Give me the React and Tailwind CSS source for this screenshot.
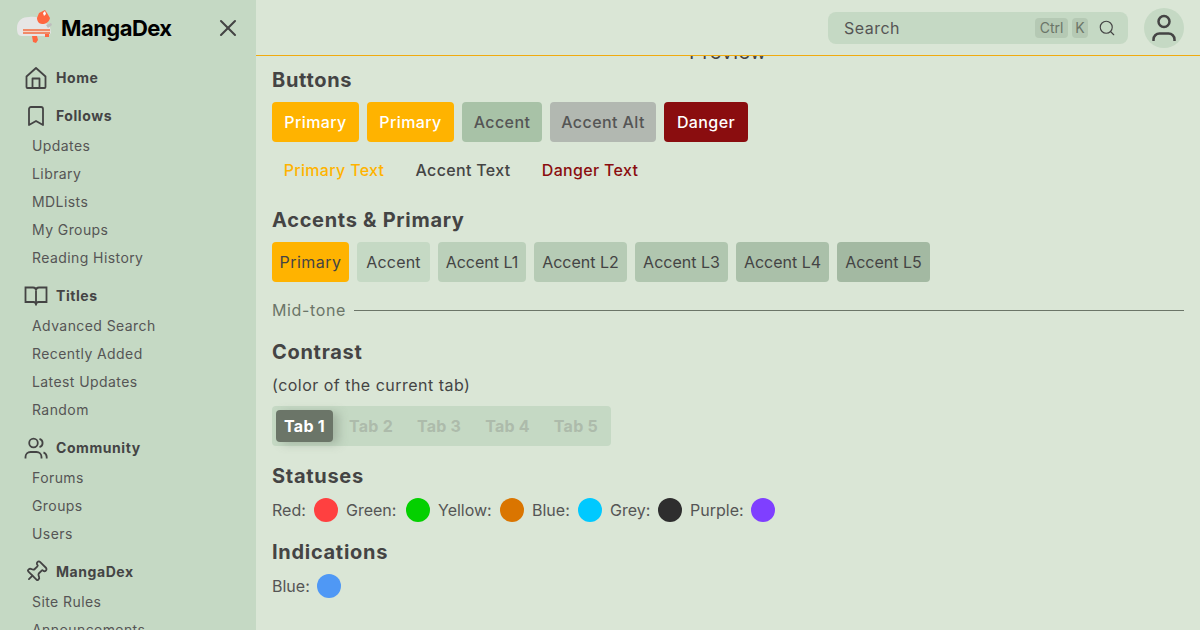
import { Bookmark, Pin, Search, X } from "lucide-react";

const font = "font-['Inter',sans-serif]";

function HomeIcon(props) {
  return (
    <svg viewBox="0 0 24 24" fill="none" stroke="currentColor" strokeWidth="1.8" strokeLinejoin="round" {...props}>
      <path d="M2.5 10.5 12 2l9.5 8.5V21a1 1 0 0 1-1 1h-17a1 1 0 0 1-1-1Z" />
      <path d="M8.5 22V12.5h7V22" />
    </svg>
  );
}

function BookIcon(props) {
  return (
    <svg viewBox="0 0 24 24" fill="none" stroke="currentColor" strokeWidth="1.8" {...props}>
      <path d="M1.5 3.5H9c1.7 0 3 1.3 3 3 0-1.7 1.3-3 3-3h7.5v14.5h-8c-1.5 0-2.5.8-2.5 2.5 0-1.7-1-2.5-2.5-2.5h-8Z" />
      <path d="M12 6.5v15" />
    </svg>
  );
}

function UsersIcon(props) {
  return (
    <svg viewBox="0 0 24 24" fill="none" stroke="currentColor" strokeWidth="1.7" {...props}>
      <circle cx="9.5" cy="7" r="4.3" />
      <path d="M1.5 22.5V21a5 5 0 0 1 5-5h6a5 5 0 0 1 5 5v1.5" />
      <path d="M15.5 2.8a4.4 4.4 0 0 1 0 8.4" />
      <path d="M19.5 16.3c2 .8 3.2 2.6 3.2 4.7v1.5" />
    </svg>
  );
}

const sections = [
  { icon: HomeIcon, title: "Home", items: [], size: "h-7" },
  { icon: Bookmark, title: "Follows", items: ["Updates", "Library", "MDLists", "My Groups", "Reading History"] },
  { icon: BookIcon, title: "Titles", items: ["Advanced Search", "Recently Added", "Latest Updates", "Random"] },
  { icon: UsersIcon, title: "Community", items: ["Forums", "Groups", "Users"] },
  { icon: Pin, title: "MangaDex", items: ["Site Rules", "Announcements"], tilt: "rotate-45" },
];

function CatLogo() {
  return (
    <svg width="44" height="40" viewBox="0 0 44 40" className="shrink-0">
      <path d="M3 20C3 12 9 9 15 9c7-1 11 1 15 4l6 6 1 6-3 3H8c-4 0-5-3-5-8z" fill="#e6e6e6" />
      <path d="M23 10l2-5 6-3 2 3 3 5c-1 4-4 6-8 6-3 0-5-3-5-6z" fill="#ff6740" />
      <path d="M29 5l2-2 1 3-2 2z" fill="#fff" />
      <path d="M32 17l5-2 1 2-4 3z" fill="#bdbdbd" />
      <path d="M9 21h27v5H9z" fill="#f08a68" />
      <path d="M9 23h27v1H9z" fill="#f3d6c8" />
      <path d="M18 28h5l1 4-2 3-3-1z" fill="#ff6740" />
      <path d="M31 26h4v3h-4z" fill="#ff6740" />
    </svg>
  );
}

function Section({ icon: Icon, title, items, size = "h-8", tilt = "" }) {
  return (
    <div className="flex flex-col">
      <div className={`flex items-center gap-2 px-6 ${size}`}>
        <Icon width={24} height={24} strokeWidth={1.8} className={`shrink-0 text-[#444] ${tilt}`} />
        <span className="text-sm font-bold tracking-[0.04em] text-[#444]">{title}</span>
      </div>
      {items.map((item) => (
        <div key={item} className="flex h-7 items-center pl-8 text-sm tracking-[0.03em] text-[#555]">
          {item}
        </div>
      ))}
    </div>
  );
}

function Sidebar() {
  return (
    <aside className="flex h-[630px] w-64 shrink-0 flex-col overflow-hidden bg-[#c5d9c4]">
      <div className="flex h-16 shrink-0 items-start pl-[14px] pr-[14px] pt-2">
        <CatLogo />
        <span className="ml-[3px] mt-[3px] text-[22px] font-bold leading-[34px] tracking-[-0.025em] text-black">MangaDex</span>
        <X size={28} strokeWidth={1.75} className="ml-auto mt-[6px] text-[#444]" />
      </div>
      <nav className="flex flex-col gap-2">
        {sections.map((s) => (
          <Section key={s.title} {...s} />
        ))}
      </nav>
    </aside>
  );
}

function Header() {
  return (
    <header className="relative z-10 flex h-14 shrink-0 items-center justify-end gap-4 border-b border-[#f0ab10] bg-[#dae6d6] pr-4">
      <div className="flex h-8 w-[300px] items-center rounded-lg bg-[#c5d9c4] pl-4 pr-3">
        <span className="text-base tracking-[0.03em] text-[#555]">Search</span>
        <span className="ml-auto flex h-5 w-[33px] items-center justify-center rounded bg-[#b5c9b4] text-sm text-[#6b7568]">Ctrl</span>
        <span className="ml-1 flex h-5 w-4 items-center justify-center rounded bg-[#b5c9b4] text-sm text-[#6b7568]">K</span>
        <Search size={18} strokeWidth={1.5} className="ml-[10px] text-[#444]" />
      </div>
      <div className="flex h-10 w-10 items-center justify-center rounded-full bg-[#c5d9c4]">
        <svg width="40" height="40" viewBox="0 0 40 40" fill="none" stroke="#444" strokeWidth="2.5">
          <circle cx="20" cy="13.5" r="5.5" />
          <path d="M9.5 33v-1.5a6 6 0 0 1 6-6h9a6 6 0 0 1 6 6V33" />
        </svg>
      </div>
    </header>
  );
}

function Btn({ className, children }) {
  return (
    <div className={`flex h-10 items-center justify-center rounded pb-px text-base ${className}`}>{children}</div>
  );
}

function Heading({ className = "", children }) {
  return <h2 className={`text-xl font-bold leading-7 tracking-[0.035em] text-[#444] ${className}`}>{children}</h2>;
}

function Dot({ label, width, className }) {
  return (
    <div className="flex items-center gap-2">
      <span className={`whitespace-nowrap text-base text-[#555] ${width}`}>{label}</span>
      <span className={`h-6 w-6 rounded-full ${className}`} />
    </div>
  );
}

function Content() {
  return (
    <div className="flex flex-col px-4">
      <div className="-mt-[18px] text-center text-xl leading-7 tracking-[0.02em] text-[#444]">Preview</div>
      <Heading>Buttons</Heading>
      <div className="mt-2 flex gap-2 font-medium tracking-[0.025em]">
        <Btn className="w-[87px] bg-[#ffb300] text-white">Primary</Btn>
        <Btn className="w-[87px] bg-[#ffb300] text-white">Primary</Btn>
        <Btn className="w-20 bg-[#a8c2a7] text-[#555]">Accent</Btn>
        <Btn className="w-[106px] bg-[#b2b8b1] text-[#555]">Accent Alt</Btn>
        <Btn className="w-[84px] bg-[#8a0d0f] text-white">Danger</Btn>
      </div>
      <div className="mt-2 flex gap-2 font-medium tracking-[0.02em]">
        <Btn className="w-[124px] text-[#ffb300]">Primary Text</Btn>
        <Btn className="w-[118px] text-[#444]">Accent Text</Btn>
        <Btn className="w-[120px] text-[#8a0d0f]">Danger Text</Btn>
      </div>
      <Heading className="mt-4">Accents &amp; Primary</Heading>
      <div className="mt-2 flex gap-2 text-[#444]">
        <Btn className="w-[77px] bg-[#ffb300] tracking-[0.03em]">Primary</Btn>
        <Btn className="w-[73px] bg-[#c5d9c4] tracking-[0.01em]">Accent</Btn>
        <Btn className="w-[88px] bg-[#bbd0ba]">Accent L1</Btn>
        <Btn className="w-[93px] bg-[#b6cbb5]">Accent L2</Btn>
        <Btn className="w-[93px] bg-[#b0c6af]">Accent L3</Btn>
        <Btn className="w-[93px] bg-[#aac0a9]">Accent L4</Btn>
        <Btn className="w-[93px] bg-[#a3b9a2]">Accent L5</Btn>
      </div>
      <div className="mt-4 flex h-6 items-center gap-2 text-base tracking-[0.04em] text-[#6b7568]">
        <span>Mid-tone</span>
        <div className="h-px flex-1 bg-[#6b7568]" />
      </div>
      <Heading className="mt-4">Contrast</Heading>
      <p className="mt-[7px] text-base leading-6 tracking-[0.03em] text-[#444]">(color of the current tab)</p>
      <div className="mt-[9px] flex h-10 w-[339px] items-center gap-6 rounded bg-[#c5d9c4] px-1 text-base font-bold tracking-[0.015em] text-[#adbbab]">
        <div className="mr-[-8px] flex h-8 w-[57px] items-center justify-center rounded bg-[#6b7568] text-white shadow-[6px_2px_10px_rgba(107,117,104,0.35)]">Tab 1</div>
        <div>Tab 2</div>
        <div>Tab 3</div>
        <div>Tab 4</div>
        <div>Tab 5</div>
      </div>
      <Heading className="mt-4">Statuses</Heading>
      <div className="mt-2 flex gap-2">
        <Dot label="Red:" width="w-[34px]" className="bg-[#ff4040]" />
        <Dot label="Green:" width="w-[52px]" className="bg-[#04d000]" />
        <Dot label="Yellow:" width="w-[54px]" className="bg-[#da7500]" />
        <Dot label="Blue:" width="w-[38px]" className="bg-[#00c9ff]" />
        <Dot label="Grey:" width="w-10" className="bg-[#2e2e2e]" />
        <Dot label="Purple:" width="w-[53px]" className="bg-[#7f3fff]" />
      </div>
      <Heading className="mt-4">Indications</Heading>
      <div className="mt-2 flex">
        <Dot label="Blue:" width="w-[37px]" className="bg-[#4f98f5]" />
      </div>
    </div>
  );
}

export default function App() {
  return (
    <div className={`flex h-[630px] w-[1200px] overflow-hidden bg-[#dae6d6] ${font}`}>
      <Sidebar />
      <main className="flex min-w-0 flex-1 flex-col overflow-hidden">
        <Header />
        <Content />
      </main>
    </div>
  );
}
